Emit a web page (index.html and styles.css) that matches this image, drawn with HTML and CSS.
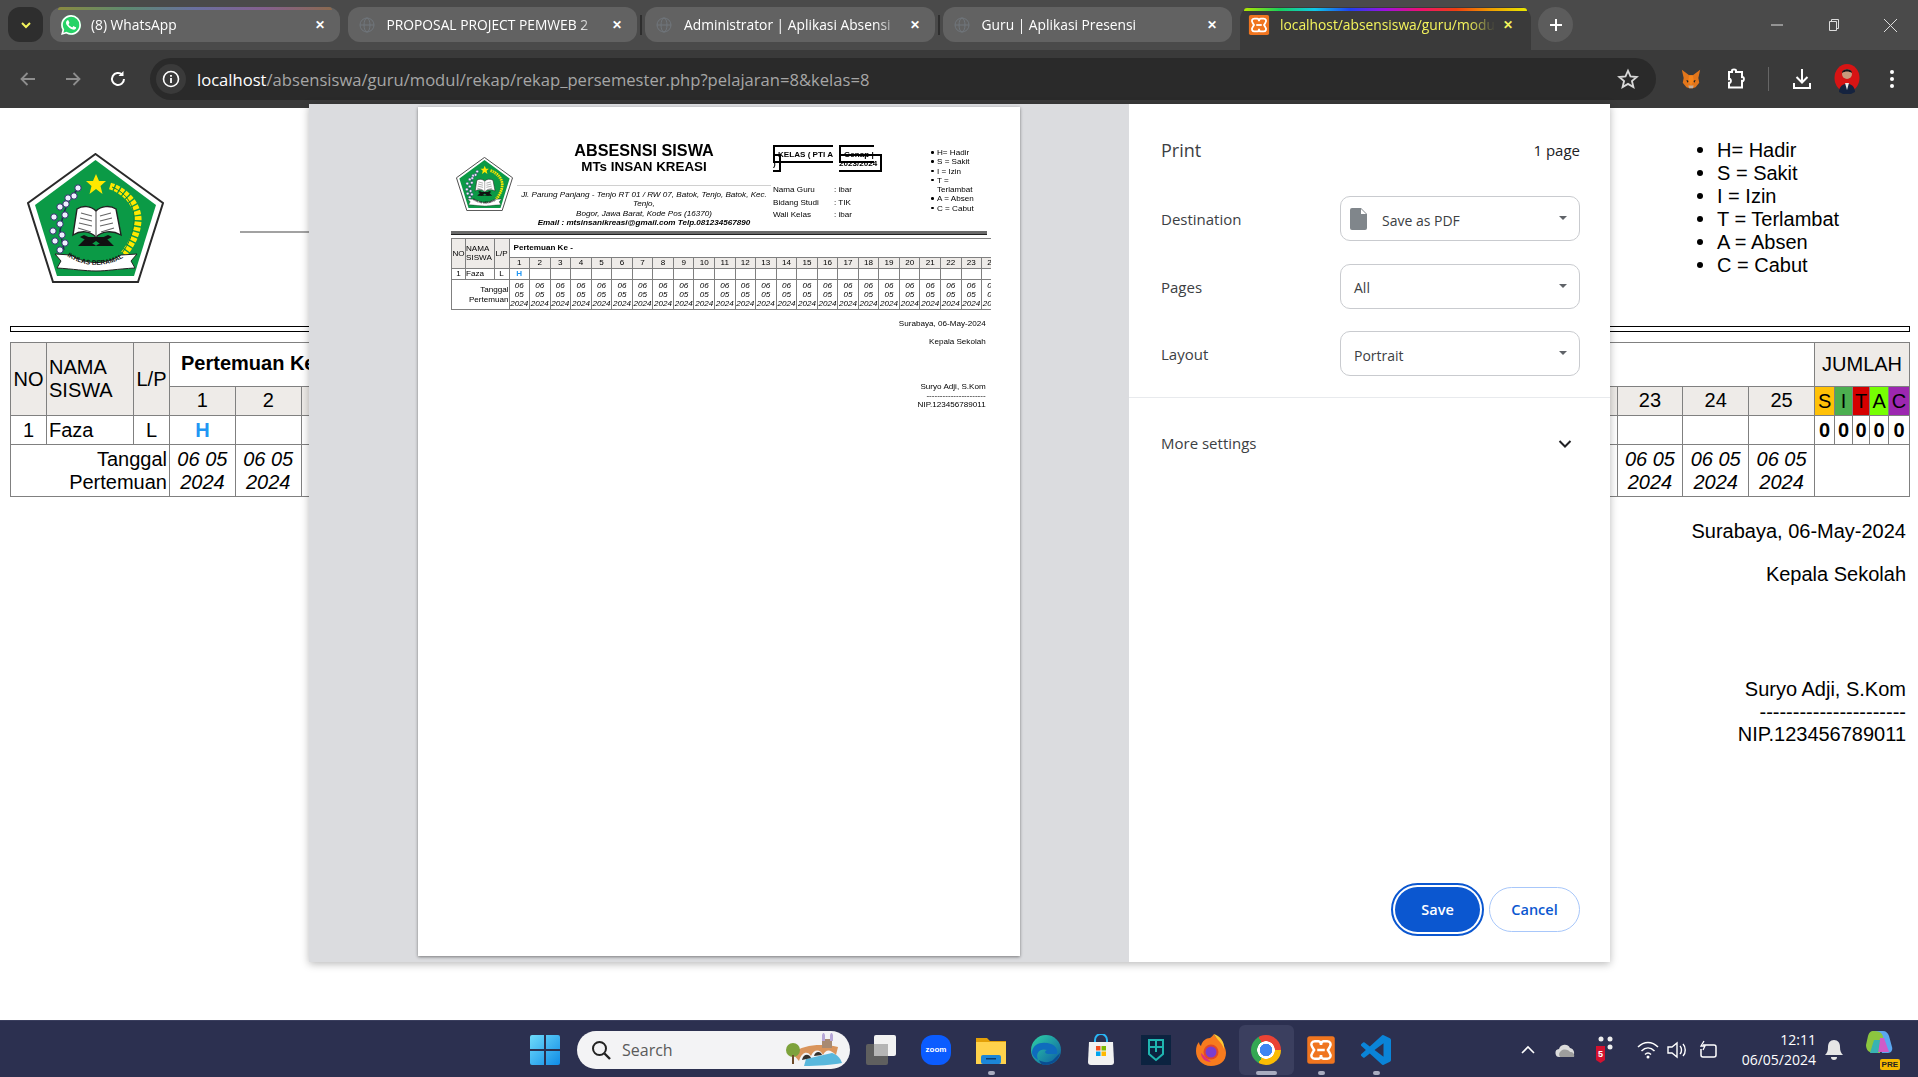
FILE: index.html
```html
<!DOCTYPE html>
<html lang="en">
<head>
    <meta charset="UTF-8">
    <title>localhost/absensiswa/guru/modul/rekap</title>
    <link rel="stylesheet" href="styles.css">
</head>
<body>
<svg class="defs" aria-hidden="true">
    <symbol id="emblem" viewBox="0 0 137 130">
        <polygon points="68.5,1 136,50 111,129 26,129 1,50" fill="#fff" stroke="#2a2a2a" stroke-width="2"/>
        <polygon points="68.5,7 129,52 107,123 30,123 8,52" fill="#0b9a46"/>
        <polygon points="69,21 72,28 79,28 73.5,33 75.5,41 69,36 62.5,41 64.5,33 59,28 66,28" fill="#ffe800"/>
        <path d="M52 34 L42 47 L36 62 L33 78 L37 97" fill="none" stroke="#1d2b4f" stroke-width="1.5"/>
        <g fill="#eef0ff" stroke="#2a2c66" stroke-width="1">
            <circle cx="51" cy="35" r="3.2"/><circle cx="47" cy="43" r="3.2"/><circle cx="41" cy="45" r="3.2"/>
            <circle cx="39" cy="51" r="3.2"/><circle cx="33" cy="54" r="3.2"/><circle cx="38" cy="62" r="3.2"/>
            <circle cx="27" cy="64" r="3.2"/><circle cx="33" cy="71" r="3.2"/><circle cx="26" cy="78" r="3.2"/>
            <circle cx="35" cy="82" r="3.2"/><circle cx="28" cy="88" r="3.2"/><circle cx="38" cy="90" r="3.2"/>
            <circle cx="33" cy="97" r="3.2"/>
        </g>
        <path d="M83 33 C100 38 112 54 111 68 C110 82 104 92 97 101" fill="none" stroke="#ffe800" stroke-width="7" stroke-dasharray="4 1.4"/>
        <path d="M85 34 C100 40 108 54 107 68 C106 82 101 92 95 100" fill="none" stroke="#0b7f3a" stroke-width="1"/>
        <path d="M46 82 L50 56 C56 52 64 53 69 58 C74 53 83 52 89 56 L94 82 C85 77 75 78 69 84 C63 78 54 77 46 82Z" fill="#fff" stroke="#222" stroke-width="1.4"/>
        <path d="M69 58V84M54 60l11 3M53 65l12 3M52 70l13 3M51 75l13 4M84 60l-11 3M85 65l-12 3M86 70l-13 3M87 75l-13 4" stroke="#666" stroke-width="1.2"/>
        <polygon points="51,93 60,84 78,84 87,93 76,93 69,88 62,93" fill="#111"/>
        <path d="M57 82l24 11H70L53 84zM81 82L57 93h11l17-9z" fill="#111"/>
        <path d="M28 101 L44 102 C60 112 78 112 94 102 L110 101 L104 108 L108 115 C90 116 80 118 69 118 C58 118 46 116 30 115 L34 108Z" fill="#fff" stroke="#222" stroke-width="1"/>
        <path id="ribbon" d="M40 103 C58 115 80 115 99 103" fill="none"/>
        <text font-family="Liberation Sans" font-size="6.6" font-weight="700" fill="#111"><textPath href="#ribbon">IKHLAS BERAMAL</textPath></text>
    </symbol>
    <symbol id="globe" viewBox="0 0 16 16">
        <g fill="none" stroke="#70767c" stroke-width="1">
            <circle cx="8" cy="8" r="7"/><ellipse cx="8" cy="8" rx="3" ry="7"/><path d="M1 8h14"/>
        </g>
    </symbol>
    <symbol id="xampp" viewBox="0 0 24 24">
        <rect x="1" y="1" width="22" height="22" rx="2" fill="#f0751f"/>
        <path d="M7 5h3c1.500 0 2 2 2 3 0-1 .5-3 2-3h3c2.500 0 3.500 2.500 2 4.500L17.500 12l1.500 2.500c1.500 2 .5 4.500-2 4.500h-3c-1.500 0-2-2-2-3 0 1-.5 3-2 3H7c-2.500 0-3.500-2.500-2-4.500L6.500 12 5 9.500C3.500 7.500 4.500 5 7 5z" fill="none" stroke="#fff" stroke-width="2"/>
        <path d="M9 12h6" stroke="#fff" stroke-width="2"/>
    </symbol>
</svg>

<header class="tabstrip">
    <button class="tab-search">
        <svg width="12" height="12" viewBox="0 0 12 12"><path d="M2 4l4 4 4-4" fill="none" stroke="#f4f45c" stroke-width="2"/></svg>
    </button>
    <div class="tab tab-whatsapp">
        <svg class="fav-wa" viewBox="0 0 24 24"><circle cx="12" cy="12" r="12" fill="#25d366"/><path fill="#fff" d="M17.472 14.382c-.297-.149-1.758-.867-2.03-.967-.273-.099-.471-.148-.67.15-.197.297-.767.966-.94 1.164-.173.199-.347.223-.644.075-.297-.15-1.255-.463-2.39-1.475-.883-.788-1.48-1.761-1.653-2.059-.173-.297-.018-.458.13-.606.134-.133.298-.347.446-.52.149-.174.198-.298.298-.497.099-.198.05-.371-.025-.52-.075-.149-.669-1.612-.916-2.207-.242-.579-.487-.5-.669-.51-.173-.008-.371-.01-.57-.01-.198 0-.52.074-.792.372-.272.297-1.04 1.016-1.04 2.479 0 1.462 1.065 2.875 1.213 3.074.149.198 2.096 3.2 5.077 4.487.709.306 1.262.489 1.694.625.712.227 1.36.195 1.871.118.571-.085 1.758-.719 2.006-1.413.248-.694.248-1.289.173-1.413-.074-.124-.272-.198-.57-.347m-5.421 7.403h-.004a9.87 9.87 0 01-5.031-1.378l-.361-.214-3.741.982.998-3.648-.235-.374a9.86 9.86 0 01-1.51-5.26c.001-5.45 4.436-9.884 9.888-9.884 2.64 0 5.122 1.03 6.988 2.898a9.825 9.825 0 012.893 6.994c-.003 5.45-4.437 9.884-9.885 9.884m8.413-18.297A11.815 11.815 0 0012.05 0C5.495 0 .16 5.335.157 11.892c0 2.096.547 4.142 1.588 5.945L.057 24l6.305-1.654a11.882 11.882 0 005.683 1.448h.005c6.554 0 11.89-5.335 11.893-11.893a11.821 11.821 0 00-3.48-8.413Z"/></svg>
        <span class="tab-title">(8) WhatsApp</span>
        <span class="tab-close">✕</span>
    </div>
    <div class="tab tab-sep">
        <svg class="fav"><use href="#globe"/></svg>
        <span class="tab-title">PROPOSAL PROJECT PEMWEB 2</span>
        <span class="tab-close">✕</span>
    </div>
    <div class="tab tab-sep">
        <svg class="fav"><use href="#globe"/></svg>
        <span class="tab-title">Administrator | Aplikasi Absensi</span>
        <span class="tab-close">✕</span>
    </div>
    <div class="tab">
        <svg class="fav"><use href="#globe"/></svg>
        <span class="tab-title">Guru | Aplikasi Presensi</span>
        <span class="tab-close">✕</span>
    </div>
    <div class="tab tab-active">
        <svg class="fav-xampp"><use href="#xampp"/></svg>
        <span class="tab-title">localhost/absensiswa/guru/modul</span>
        <span class="tab-close">✕</span>
    </div>
    <button class="tab-new">
        <svg width="14" height="14" viewBox="0 0 14 14"><path d="M7 1v12M1 7h12" stroke="#fff" stroke-width="2"/></svg>
    </button>
    <div class="win-controls">
        <span class="win-btn"><svg width="12" height="12" viewBox="0 0 12 12"><path d="M0 6h12" stroke="#ddd"/></svg></span>
        <span class="win-btn"><svg width="12" height="14" viewBox="0 0 12 14"><path d="M1.500 3.500h7v9h-7zM3.500 3V1.500h7v9H9" fill="none" stroke="#ddd"/></svg></span>
        <span class="win-btn"><svg width="15" height="15" viewBox="0 0 15 15"><path d="M1 1l13 13M14 1L1 14" stroke="#ddd"/></svg></span>
    </div>
</header>

<nav class="toolbar">
    <span class="tool"><svg width="18" height="18" viewBox="0 0 18 18"><path d="M16 9H3M8.500 3L2.500 9l6 6" fill="none" stroke="#8e8e8e" stroke-width="1.800"/></svg></span>
    <span class="tool"><svg width="18" height="18" viewBox="0 0 18 18"><path d="M2 9h13M9.500 3l6 6-6 6" fill="none" stroke="#8e8e8e" stroke-width="1.800"/></svg></span>
    <span class="tool"><svg width="18" height="18" viewBox="0 0 18 18"><path d="M15 9a6 6 0 1 1-1.800-4.300" fill="none" stroke="#fff" stroke-width="2"/><path d="M14.500 1v5h-5" fill="#fff"/></svg></span>
    <div class="omnibox">
        <span class="site-info"><svg width="18" height="18" viewBox="0 0 18 18"><circle cx="9" cy="9" r="7.500" fill="none" stroke="#fff" stroke-width="1.600"/><path d="M9 8v5M9 5v1.800" stroke="#fff" stroke-width="1.800"/></svg></span>
        <span class="url"><b>localhost</b>/absensiswa/guru/modul/rekap/rekap_persemester.php?pelajaran=8&amp;kelas=8</span>
        <svg class="star" width="22" height="22" viewBox="0 0 24 24"><path d="M12 3l2.700 6.200 6.800.6-5.200 4.400 1.600 6.600L12 17.300l-5.900 3.500 1.600-6.600-5.200-4.400 6.800-.6z" fill="none" stroke="#d8d8d8" stroke-width="2"/></svg>
    </div>
    <span class="tool tool-first"><svg width="22" height="22" viewBox="0 0 24 24"><path d="M2 2l8 6h4l8-6-2 9 1 5-4 5-3 1h-4l-3-1-4-5 1-5z" fill="#e2761b"/><path d="M7 13l3 1-2 2zM17 13l-3 1 2 2z" fill="#222"/><path d="M9 19h6l-1 3h-4z" fill="#c0ad9e"/><path d="M10 8h4l1 6-3 5-3-5z" fill="#f6851b"/></svg></span>
    <span class="tool"><svg width="20" height="22" viewBox="0 0 20 22"><path d="M6 4V2.500c0-1.500 4-1.500 4 0V4h6v5c2.500-.5 2.500 4.500 0 4v6.500H3V15c2.500.5 2.500-5 0-4V4z" fill="none" stroke="#fff" stroke-width="2"/></svg></span>
    <span class="tool-sep"></span>
    <span class="tool"><svg width="20" height="22" viewBox="0 0 20 22"><path d="M10 1v13M4.500 9l5.500 5.500L15.500 9M2 15v5h16v-5" fill="none" stroke="#fff" stroke-width="2"/></svg></span>
    <span class="tool"><svg width="26" height="30" viewBox="0 0 26 30"><ellipse cx="13" cy="14" rx="12.500" ry="14" fill="#d71414"/><circle cx="13" cy="10" r="5" fill="#c99a7c"/><path d="M8 9c0-5 10-5 10 0-3-2-7-2-10 0z" fill="#15151a"/><path d="M5 28c0-11 16-11 16 0l-4 2H9z" fill="#15233f"/><path d="M11 19h4l-2 7z" fill="#e8e8e8"/></svg></span>
    <span class="tool"><svg width="6" height="20" viewBox="0 0 6 20"><circle cx="3" cy="3" r="2" fill="#fff"/><circle cx="3" cy="10" r="2" fill="#fff"/><circle cx="3" cy="17" r="2" fill="#fff"/></svg></span>
</nav>

<main class="page">
    <div class="doc-head">
        <svg class="doc-logo"><use href="#emblem"/></svg>
        <div class="doc-title"><hr class="doc-line"></div>
        <ul class="doc-legend">
            <li>H= Hadir</li>
            <li>S = Sakit</li>
            <li>I = Izin</li>
            <li>T = Terlambat</li>
            <li>A = Absen</li>
            <li>C = Cabut</li>
        </ul>
    </div>
    <div class="doc-rule"></div>
    <table class="rekap">
        <colgroup>
            <col class="c-no"><col class="c-name"><col class="c-lp"><col class="c-day" span="25">
            <col class="c-s"><col class="c-i"><col class="c-t"><col class="c-a"><col class="c-c">
        </colgroup>
        <tr class="row-head">
            <th rowspan="2">NO</th>
            <th rowspan="2" class="left">NAMA SISWA</th>
            <th rowspan="2">L/P</th>
            <td colspan="25" class="meet"><b>Pertemuan Ke -</b></td>
            <th colspan="5">JUMLAH</th>
        </tr>
        <tr class="row-num row-title">
            <th>1</th><th>2</th><th>3</th><th>4</th><th>5</th><th>6</th><th>7</th><th>8</th><th>9</th><th>10</th>
            <th>11</th><th>12</th><th>13</th><th>14</th><th>15</th><th>16</th><th>17</th><th>18</th><th>19</th><th>20</th>
            <th>21</th><th>22</th><th>23</th><th>24</th><th>25</th>
            <th class="sum-s">S</th><th class="sum-i">I</th><th class="sum-t">T</th><th class="sum-a">A</th><th class="sum-c">C</th>
        </tr>
        <tr class="row-num">
            <td>1</td><td class="left">Faza</td><td>L</td>
            <td class="hadir">H</td><td></td><td></td><td></td><td></td><td></td><td></td><td></td><td></td><td></td>
            <td></td><td></td><td></td><td></td><td></td><td></td><td></td><td></td><td></td><td></td>
            <td></td><td></td><td></td><td></td><td></td>
            <td class="zero">0</td><td class="zero">0</td><td class="zero">0</td><td class="zero">0</td><td class="zero">0</td>
        </tr>
        <tr class="row-date">
            <td colspan="3" class="right">Tanggal<br>Pertemuan</td>
            <td>06 05 2024</td><td>06 05 2024</td><td>06 05 2024</td><td>06 05 2024</td><td>06 05 2024</td>
            <td>06 05 2024</td><td>06 05 2024</td><td>06 05 2024</td><td>06 05 2024</td><td>06 05 2024</td>
            <td>06 05 2024</td><td>06 05 2024</td><td>06 05 2024</td><td>06 05 2024</td><td>06 05 2024</td>
            <td>06 05 2024</td><td>06 05 2024</td><td>06 05 2024</td><td>06 05 2024</td><td>06 05 2024</td>
            <td>06 05 2024</td><td>06 05 2024</td><td>06 05 2024</td><td>06 05 2024</td><td>06 05 2024</td>
            <td colspan="5" class="blank"></td>
        </tr>
    </table>
    <div class="sign">
        <p>Surabaya, 06-May-2024</p>
        <p>Kepala Sekolah</p>
        <p class="sign-name">Suryo Adji, S.Kom<br>----------------------<br>NIP.123456789011</p>
    </div>

    <!-- print dialog -->
    <section class="print">
        <div class="preview">
            <div class="paper">
                <div class="sheet">
                    <div class="pv-head">
                        <svg class="pv-logo"><use href="#emblem"/></svg>
                        <div class="pv-title">
                            <div class="pv-h1">ABSESNSI SISWA</div>
                            <div class="pv-h2">MTs INSAN KREASI</div>
                            <hr class="pv-line">
                            <div class="pv-addr">Jl. Parung Panjang - Tenjo RT 01 / RW 07, Batok, Tenjo, Batok, Kec. Tenjo,<br>Bogor, Jawa Barat, Kode Pos (16370)<br><b>Email : mtsinsanikreasi@gmail.com Telp.081234567890</b></div>
                        </div>
                        <div class="pv-info">
                            <div class="pv-boxes">
                                <div class="pv-box-kelas"><span class="pv-box">KELAS ( PTI A )</span></div>
                                <div class="pv-box-sem"><span class="pv-box">Genap | 2023/2024</span></div>
                            </div>
                            <div class="pv-teacher">
                                <span>Nama Guru</span><span>: ibar</span>
                                <span>Bidang Studi</span><span>: TIK</span>
                                <span>Wali Kelas</span><span>: ibar</span>
                            </div>
                        </div>
                        <ul class="pv-legend">
                            <li>H= Hadir</li>
                            <li>S = Sakit</li>
                            <li>I = Izin</li>
                            <li>T = Terlambat</li>
                            <li>A = Absen</li>
                            <li>C = Cabut</li>
                        </ul>
                    </div>
                    <div class="pv-rule"></div>
                    <div class="pv-clip">
                        <table class="pv-table">
                            <colgroup>
                                <col class="p-no"><col class="p-name"><col class="p-lp"><col class="p-day" span="25">
                            </colgroup>
                            <tr class="pr-head">
                                <th rowspan="2">NO</th>
                                <th rowspan="2" class="left">NAMA SISWA</th>
                                <th rowspan="2">L/P</th>
                                <td colspan="25" class="pv-meet"><b>Pertemuan Ke -</b></td>
                            </tr>
                            <tr class="pr-num">
                                <th>1</th><th>2</th><th>3</th><th>4</th><th>5</th><th>6</th><th>7</th><th>8</th><th>9</th><th>10</th>
                                <th>11</th><th>12</th><th>13</th><th>14</th><th>15</th><th>16</th><th>17</th><th>18</th><th>19</th><th>20</th>
                                <th>21</th><th>22</th><th>23</th><th>24</th><th>25</th>
                            </tr>
                            <tr class="pr-row">
                                <td>1</td><td class="left">Faza</td><td>L</td>
                                <td class="hadir">H</td><td></td><td></td><td></td><td></td><td></td><td></td><td></td><td></td><td></td>
                                <td></td><td></td><td></td><td></td><td></td><td></td><td></td><td></td><td></td><td></td>
                                <td></td><td></td><td></td><td></td><td></td>
                            </tr>
                            <tr class="pr-date">
                                <td colspan="3" class="right">Tanggal<br>Pertemuan</td>
                                <td>06 05 2024</td><td>06 05 2024</td><td>06 05 2024</td><td>06 05 2024</td><td>06 05 2024</td>
                                <td>06 05 2024</td><td>06 05 2024</td><td>06 05 2024</td><td>06 05 2024</td><td>06 05 2024</td>
                                <td>06 05 2024</td><td>06 05 2024</td><td>06 05 2024</td><td>06 05 2024</td><td>06 05 2024</td>
                                <td>06 05 2024</td><td>06 05 2024</td><td>06 05 2024</td><td>06 05 2024</td><td>06 05 2024</td>
                                <td>06 05 2024</td><td>06 05 2024</td><td>06 05 2024</td><td>06 05 2024</td><td>06 05 2024</td>
                            </tr>
                        </table>
                    </div>
                    <div class="pv-sign">
                        <p>Surabaya, 06-May-2024</p>
                        <p>Kepala Sekolah</p>
                        <p class="pv-sign-name">Suryo Adji, S.Kom<br>----------------------<br>NIP.123456789011</p>
                    </div>
                </div>
            </div>
        </div>
        <aside class="side">
            <div class="side-head">
                <span class="side-title">Print</span>
                <span class="side-pages">1 page</span>
            </div>
            <div class="settings">
                <div class="field">
                    <span class="field-label">Destination</span>
                    <div class="select select-dest">
                        <svg width="18" height="22" viewBox="0 0 18 22"><path d="M2 0h9l6 6v14a2 2 0 0 1-2 2H2a2 2 0 0 1-2-2V2a2 2 0 0 1 2-2z" fill="#80868b"/><path d="M11 1l5 5h-5z" fill="#fff"/></svg>
                        <span>Save as PDF</span>
                    </div>
                </div>
                <div class="field">
                    <span class="field-label">Pages</span>
                    <div class="select"><span>All</span></div>
                </div>
                <div class="field">
                    <span class="field-label">Layout</span>
                    <div class="select"><span>Portrait</span></div>
                </div>
            </div>
            <div class="more">
                <span>More settings</span>
                <svg width="14" height="10" viewBox="0 0 14 10"><path d="M1.500 2L7 7.500 12.500 2" fill="none" stroke="#202124" stroke-width="2"/></svg>
            </div>
            <div class="actions">
                <button class="btn btn-save">Save</button>
                <button class="btn btn-cancel">Cancel</button>
            </div>
        </aside>
    </section>
</main>

<footer class="taskbar">
    <span class="task task-win">
        <svg width="30" height="30" viewBox="0 0 30 30"><defs><linearGradient id="win" x1="0" y1="0" x2="1" y2="1"><stop offset="0" stop-color="#6fdcfb"/><stop offset="1" stop-color="#0f8be6"/></linearGradient></defs><path d="M0 2a2 2 0 0 1 2-2h12v14H0zM16 0h12a2 2 0 0 1 2 2v12H16zM0 16h14v14H2a2 2 0 0 1-2-2zM16 16h14v12a2 2 0 0 1-2 2H16z" fill="url(#win)"/></svg>
    </span>
    <div class="search">
        <svg width="20" height="20" viewBox="0 0 20 20"><circle cx="8.500" cy="8.500" r="6.500" fill="none" stroke="#222" stroke-width="2"/><path d="M13.500 13.500L19 19" stroke="#222" stroke-width="2.400"/></svg>
        <span class="search-text">Search</span>
        <svg class="search-art" width="58" height="34" viewBox="0 0 58 34"><path d="M18 33c14 0 28-1 38-3-2-6-6-9-10-10l-26 6z" fill="#59b7dc"/><path d="M6 20C18 12 34 10 52 14l-2 8c-6-6-10-6-13 0-3-6-9-6-12 1-3-5-9-5-12 5z" fill="#d9945c"/><path d="M16 27c1-6 7-7 9-2zM28 23c1-5 7-5 8-1z" fill="#33302c"/><rect x="36" y="6" width="10" height="9" fill="#a88a72"/><path d="M36 2v6h3V2l-1.500-3zM44 2v6h3V2l-1.500-3z" fill="#b7a7d8"/><circle cx="7" cy="17" r="7" fill="#7da23c"/><rect x="6" y="22" width="2" height="9" fill="#6d4b2a"/></svg>
    </div>
    <span class="task"><svg width="30" height="30" viewBox="0 0 30 30"><rect x="0" y="9" width="22" height="21" rx="2" fill="#5f5f5f"/><rect x="8" y="0" width="22" height="21" rx="2" fill="#f2f2f2"/><rect x="8" y="9" width="14" height="12" fill="#b5b5b5"/></svg></span>
    <span class="task"><span class="zoom-ic">zoom</span></span>
    <span class="task task-on">
        <svg width="30" height="28" viewBox="0 0 30 28"><path d="M0 2h11l3 3h16v23H0z" fill="#e3a008"/><path d="M0 6h30v22H0z" fill="#ffd24c"/><rect x="5" y="19" width="20" height="9" rx="2" fill="#1c86d8"/><rect x="10" y="22" width="10" height="1.500" fill="#0b3d70"/></svg>
    </span>
    <span class="task"><svg width="30" height="30" viewBox="0 0 30 30"><defs><linearGradient id="edge" x1="0" y1="0" x2="1" y2="1"><stop offset="0" stop-color="#2fd4a5"/><stop offset="1" stop-color="#0c59a4"/></linearGradient></defs><circle cx="15" cy="15" r="15" fill="url(#edge)"/><path d="M1 17C2 8 12 6 20 9c5 2 7 6 6 10h-9c-3 0-4-3-1-4-6-2-12 2-9 10-3-2-6-4-6-8z" fill="#0f6cbd"/><path d="M29 18c-1 7-8 12-15 12-3 0-5-2-6-5 4 3 12 3 15-1l6-6z" fill="#0a4d92"/></svg></span>
    <span class="task"><svg width="28" height="32" viewBox="0 0 28 32"><path d="M8 9V6a6 6 0 0 1 12 0v3" fill="none" stroke="#29b6f6" stroke-width="2"/><path d="M2 8h24l1 20a3 3 0 0 1-3 3H4a3 3 0 0 1-3-3z" fill="#f2f2f2"/><rect x="9" y="12" width="4.500" height="4.500" fill="#f25022"/><rect x="14.500" y="12" width="4.500" height="4.500" fill="#7fba00"/><rect x="9" y="17.500" width="4.500" height="4.500" fill="#00a4ef"/><rect x="14.500" y="17.500" width="4.500" height="4.500" fill="#ffb900"/></svg></span>
    <span class="task"><svg width="30" height="30" viewBox="0 0 30 30"><rect width="30" height="30" fill="#0c2340"/><path d="M8 5h14v14l-7 6-7-6zM15 5v12M8 12h14" fill="none" stroke="#1fb5b0" stroke-width="2"/></svg></span>
    <span class="task"><svg width="30" height="32" viewBox="0 0 30 32"><path d="M15 32C6 32 0 25 0 17c0-4 1-7 3-9 0 2 1 3 2 4 1-5 5-8 9-8 2-1 3-3 4-4 1 3 3 4 5 6 4 3 7 8 7 13 0 8-6 13-15 13z" fill="#f77b1e"/><path d="M18 0c1 4 8 8 10 15 1-7-4-13-10-15z" fill="#ffc933"/><path d="M15 28c-6 0-10-4-10-9 3 3 6 5 10 9z" fill="#e0307a"/><circle cx="15" cy="18" r="7.500" fill="#e0482a"/><circle cx="15" cy="18" r="5.500" fill="#7a3dd0"/></svg></span>
    <span class="task task-chrome task-on task-wide"><span class="chrome-ic"></span></span>
    <span class="task task-on"><svg width="30" height="34"><use href="#xampp"/></svg></span>
    <span class="task task-on"><svg width="30" height="34" viewBox="0 0 24 24"><path fill="#0a84d8" d="M23.150 2.587L18.210.21a1.494 1.494 0 0 0-1.705.29l-9.460 8.630-4.120-3.128a.999.999 0 0 0-1.276.057L.327 7.261A1 1 0 0 0 .326 8.740L3.899 12 .326 15.260a1 1 0 0 0 .001 1.479L1.650 17.940a.999.999 0 0 0 1.276.057l4.120-3.128 9.460 8.630a1.492 1.492 0 0 0 1.704.29l4.942-2.377A1.500 1.500 0 0 0 24 20.060V3.939a1.500 1.500 0 0 0-.850-1.352zm-5.146 14.861L10.826 12l7.178-5.448v10.896z"/></svg></span>

    <div class="tray">
        <span class="tray-ic"><svg width="14" height="10" viewBox="0 0 14 10"><path d="M1 8l6-6 6 6" fill="none" stroke="#fff" stroke-width="1.600"/></svg></span>
        <span class="tray-ic tray-wide"><svg width="22" height="16" viewBox="0 0 22 16"><path d="M5 15a4 4 0 0 1-1-8 6 6 0 0 1 11-1 5 5 0 0 1 2 9z" fill="#dcdcdc"/><path d="M5 15a4 4 0 0 1 1-6c3-3 8-1 9 1 3 0 5 2 4 5z" fill="#9d9d9d"/></svg></span>
        <span class="tray-ic tray-wide"><svg width="18" height="28" viewBox="0 0 18 28"><circle cx="6" cy="3" r="2.500" fill="#eee"/><circle cx="15" cy="3" r="2.500" fill="#eee"/><circle cx="15" cy="11" r="2.500" fill="#eee"/><path d="M1 10h9v14l-4.500 3L1 24z" fill="#d3112f"/><text x="5.500" y="21" font-family="Liberation Sans" font-size="9" font-weight="700" fill="#fff" text-anchor="middle">5</text></svg></span>
        <span class="tray-ic tray-gap"><svg width="22" height="18" viewBox="0 0 22 18"><path d="M1 6c6-6 14-6 20 0M4.500 10c4-4 9-4 13 0M8 13.500c2-2 4-2 6 0" fill="none" stroke="#fff" stroke-width="1.500"/><circle cx="11" cy="16" r="1.500" fill="#fff"/></svg></span>
        <span class="tray-ic"><svg width="22" height="18" viewBox="0 0 22 18"><path d="M1 6h4l5-4v14l-5-4H1z" fill="none" stroke="#fff" stroke-width="1.400"/><path d="M13 5c2 2 2 6 0 8M16 3c3 3 3 9 0 12" fill="none" stroke="#fff" stroke-width="1.400"/></svg></span>
        <span class="tray-ic"><svg width="20" height="20" viewBox="0 0 20 20"><path d="M5 5h11a2 2 0 0 1 2 2v8a2 2 0 0 1-2 2H5a2 2 0 0 1-2-2V9" fill="none" stroke="#fff" stroke-width="1.500"/><path d="M6 1L3 6h4l-2 4" fill="none" stroke="#fff" stroke-width="1.300"/></svg></span>
        <div class="clock"><div>12:11</div><div>06/05/2024</div></div>
        <span class="bell"><svg width="18" height="22" viewBox="0 0 18 22"><path d="M9 1c-4 0-6 3-6 7 0 4-1 6-3 8h18c-2-2-3-4-3-8 0-4-2-7-6-7z" fill="#e6e6e6"/><path d="M6 18a3 3 0 0 0 6 0z" fill="#e6e6e6"/></svg></span>
        <span class="copilot">
            <svg width="28" height="32" viewBox="0 0 28 32"><path d="M8 1h9c3 0 5 2 6 5l3 11c1 3-1 6-4 6h-6L8 1z" fill="#5ba7f0"/><path d="M8 1C4 1 3 3 2 6L0 15c0 5 3 8 8 8h6l3-13c1-4-1-9-9-9z" fill="#8cc63f"/><path d="M14 8h4l5 14H12z" fill="#d05bc7"/><path d="M8 10h6l-2 13H4z" fill="#38b3b3"/></svg>
            <span class="pre">PRE</span>
        </span>
    </div>
</footer>
</body>
</html>
```

FILE: styles.css
```css
* {
    margin: 0;
    padding: 0;
    box-sizing: border-box;
    list-style: none;
}

html, body {
    width: 1918px;
    height: 1077px;
    overflow: hidden;
}

body {
    display: flex;
    flex-direction: column;
    background-color: #fff;
    font-family: "Liberation Sans", sans-serif;
}

button {
    border: 0;
    font-family: inherit;
}

.defs {
    position: absolute;
    width: 0;
    height: 0;
}

/* tabs */
.tabstrip {
    height: 50px;
    flex: none;
    display: flex;
    align-items: flex-start;
    padding: 7px 0 0 8px;
    background-color: #4a4a4a;
    font-family: "Open Sans", sans-serif;
    color: #fff;
}

.tab-search {
    width: 35px;
    height: 35px;
    margin-right: 7px;
    border-radius: 12px;
    background-color: #2e2e2e;
    display: flex;
    align-items: center;
    justify-content: center;
}

.tab {
    position: relative;
    width: 289.5px;
    height: 35px;
    margin-right: 8px;
    padding: 0 15px 0 11px;
    border-radius: 12px;
    background-color: #626262;
    display: flex;
    align-items: center;
    font-size: 13.8px;
}

.tab-whatsapp::before {
    content: "";
    position: absolute;
    left: 8px;
    right: 8px;
    top: 0;
    height: 3px;
    border-radius: 3px 3px 0 0;
    background: linear-gradient(90deg, #8a8a40, #5d8a70, #6a70a0, #85608f, #8a6a50);
}

.tab-sep::after {
    content: "";
    position: absolute;
    right: -5px;
    top: 8px;
    width: 2px;
    height: 20px;
    background-color: #2e2e2e;
}

.tab-active {
    width: 291px;
    height: 43px;
    margin-right: 7px;
    padding: 0 18px 8px 8px;
    border-radius: 12px 12px 0 0;
    background-color: #3a3a3a;
    color: #f4f45c;
}

.tab-active::before {
    content: "";
    position: absolute;
    left: 4px;
    right: 4px;
    top: 1px;
    height: 3px;
    border-radius: 3px 3px 0 0;
    background: linear-gradient(90deg, #b4e800, #18d05a, #10c8e8, #2040f0, #a010e0, #f01070, #f04010, #f0a000, #e8e800);
}

.fav {
    width: 16px;
    height: 16px;
    margin-right: 12px;
    flex: none;
}

.fav-wa {
    width: 20px;
    height: 20px;
    margin-right: 10px;
    flex: none;
}

.fav-xampp {
    width: 22px;
    height: 24px;
    margin-right: 10px;
    flex: none;
}

.tab-title {
    flex: 1;
    overflow: hidden;
    white-space: nowrap;
    -webkit-mask-image: linear-gradient(90deg, #000 88%, transparent);
    mask-image: linear-gradient(90deg, #000 88%, transparent);
}

.tab-close {
    flex: none;
    margin-left: 8px;
    font-size: 12px;
    font-weight: 700;
}

.tab-new {
    width: 35px;
    height: 35px;
    border-radius: 50%;
    background-color: #5c5c5c;
    display: flex;
    align-items: center;
    justify-content: center;
}

.win-controls {
    display: flex;
    margin: -7px -1px 0 auto;
}

.win-btn {
    width: 57px;
    height: 50px;
    display: flex;
    align-items: center;
    justify-content: center;
}

/* address bar */
.toolbar {
    height: 58px;
    flex: none;
    display: flex;
    align-items: center;
    padding: 0 4px 0 5px;
    background-color: #3a3a3a;
}

.tool {
    width: 45px;
    height: 42px;
    flex: none;
    display: flex;
    align-items: center;
    justify-content: center;
}

.omnibox {
    width: 1506px;
    height: 42px;
    margin-left: 10px;
    flex: none;
    display: flex;
    align-items: center;
    padding: 0 17px 0 6px;
    border-radius: 21px;
    background-color: #2a2a2a;
    font-family: "Open Sans", sans-serif;
    color: #a6a6a6;
}

.site-info {
    width: 30px;
    height: 30px;
    border-radius: 50%;
    background-color: #3a3a3a;
    display: flex;
    align-items: center;
    justify-content: center;
}

.url {
    margin-left: 11px;
    font-size: 16.6px;
    white-space: nowrap;
}

.url b {
    font-weight: 400;
    color: #fff;
}

.star {
    margin-left: auto;
}

.tool-first {
    margin-left: 12px;
}

.tool-sep {
    width: 1px;
    height: 24px;
    margin: 0 10px;
    background-color: #666;
}

/* page under the dialog */
.page {
    position: relative;
    flex: 1;
    padding: 0 8px 0 10px;
    font-size: 20px;
    line-height: 23px;
    color: #000;
}

.doc-head {
    height: 218px;
    display: flex;
}

.doc-logo {
    width: 137px;
    height: 130px;
    margin: 45px 76px 0 17px;
    flex: none;
}

.doc-title {
    flex: 1;
    padding: 123px 300px 0 0;
}

.doc-line {
    border: 0;
    height: 2px;
    background-color: #a2a2a2;
}

.doc-legend {
    width: 193px;
    margin-top: 31px;
    flex: none;
}

.doc-legend li,
.pv-legend li {
    position: relative;
}

.doc-legend li::before {
    content: "";
    position: absolute;
    left: -20px;
    top: 8px;
    width: 6px;
    height: 6px;
    border-radius: 50%;
    background-color: #000;
}

.doc-rule {
    height: 6px;
    border: 1px solid #000;
}

.rekap {
    width: 1900px;
    margin-top: 10px;
    table-layout: fixed;
    border-collapse: collapse;
}

.rekap th,
.rekap td {
    border: 1px solid #808080;
    padding: 0 2px;
    text-align: center;
    font-weight: 400;
}

.rekap th {
    background-color: #eeebe8;
}

.c-no { width: 36px; }
.c-name { width: 87px; }
.c-lp { width: 36px; }
.c-day { width: 65.8px; }
.c-s { width: 20px; }
.c-i { width: 18px; }
.c-t { width: 17px; }
.c-a { width: 19px; }
.c-c { width: 21px; }

.row-head { height: 44px; }
.row-num { height: 29px; }
.row-date { height: 52px; }

.row-title th {
    padding-bottom: 1px;
}

.row-date td {
    font-style: italic;
}

.rekap .left,
.pv-table .left {
    text-align: left;
}

.rekap .right,
.pv-table .right {
    text-align: right;
    font-style: normal;
}

.rekap .meet {
    text-align: left;
    padding: 0 0 3px 11px;
}

.rekap .hadir {
    font-weight: 700;
    color: #2196f3;
}

.rekap .zero {
    font-weight: 700;
    padding: 0;
}

.rekap .sum-s { background-color: #ffc107; padding: 0; }
.rekap .sum-i { background-color: #4caf50; padding: 0; }
.rekap .sum-t { background-color: #d50000; padding: 0; }
.rekap .sum-a { background-color: #76ff03; padding: 0; }
.rekap .sum-c { background-color: #9c27b0; padding: 0; }

.sign {
    padding: 23px 4px 0 0;
    text-align: right;
}

.sign p {
    margin-bottom: 20px;
}

.sign .sign-name {
    margin-top: 92px;
    line-height: 22.5px;
}

/* print dialog */
.print {
    position: absolute;
    left: 309px;
    top: -4px;
    width: 1301px;
    height: 858px;
    display: flex;
    box-shadow: 0 2px 8px rgba(0, 0, 0, .28);
}

.preview {
    width: 820px;
    padding: 3px 0 0 109px;
    background-color: #dbdcdf;
}

.paper {
    width: 602px;
    height: 849px;
    background-color: #fff;
    box-shadow: 0 1px 3px rgba(0, 0, 0, .45);
    overflow: hidden;
}

.sheet {
    padding: 36px 0 0 33px;
    font-size: 8.1px;
    line-height: 9.3px;
    color: #000;
    filter: blur(.3px);
}

.pv-head {
    height: 88px;
    display: flex;
}

.pv-logo {
    width: 57px;
    height: 54px;
    margin: 14px 4px 0 5px;
    flex: none;
}

.pv-title {
    width: 254px;
    flex: none;
    text-align: center;
}

.pv-h1 {
    margin-top: -1px;
    font-size: 16.2px;
    line-height: 17px;
    font-weight: 700;
}

.pv-h2 {
    font-size: 13.4px;
    line-height: 15px;
    font-weight: 700;
}

.pv-line {
    border: 0;
    height: 1px;
    margin: 11px 0 4px;
    background-color: #d0d0d0;
}

.pv-addr {
    font-style: italic;
}

.pv-info {
    width: 160px;
    margin-left: 2px;
    flex: none;
}

.pv-boxes {
    display: flex;
    height: 36px;
    margin-top: 6px;
    font-weight: 700;
}

.pv-box-kelas {
    width: 60px;
    margin-right: 6px;
    flex: none;
}

.pv-box-sem {
    width: 46px;
    flex: none;
}

.pv-box {
    border: 2px solid #000;
    padding: 2.5px 3px;
}

.pv-teacher {
    display: grid;
    grid-template-columns: 61px auto;
    grid-auto-rows: 12.6px;
}

.pv-legend {
    width: 42px;
    margin: 5px 0 0 4px;
    flex: none;
}

.pv-legend li::before {
    content: "";
    position: absolute;
    left: -6px;
    top: 3px;
    width: 2.5px;
    height: 2.5px;
    border-radius: 50%;
    background-color: #000;
}

.pv-rule {
    width: 536px;
    height: 4px;
    background-color: #6a6a6a;
    border-bottom: 1px solid #222;
}

.pv-clip {
    width: 540px;
    margin-top: 3px;
    overflow: hidden;
}

.pv-table {
    width: 571.2px;
    table-layout: fixed;
    border-collapse: collapse;
}

.pv-table th,
.pv-table td {
    border: 1px solid #808080;
    padding: 0;
    text-align: center;
    font-weight: 400;
}

.pv-table th {
    background-color: #eeebe8;
}

.p-no { width: 14px; }
.p-name { width: 28.5px; }
.p-lp { width: 15px; }
.p-day { width: 20.55px; }

.pr-head { height: 19px; }
.pr-num { height: 10.7px; }
.pr-row { height: 11.5px; }
.pr-date { height: 30px; }

.pr-date td {
    font-style: italic;
}

.pv-table .pv-meet {
    text-align: left;
    padding: 0 0 1px 4px;
}

.pv-table .hadir {
    font-weight: 700;
    color: #2196f3;
}

.pv-sign {
    width: 534.700px;
    padding-top: 8.500px;
    text-align: right;
}

.pv-sign p {
    margin-bottom: 8.700px;
}

.pv-sign .pv-sign-name {
    margin-top: 36px;
    line-height: 9px;
}

.side {
    flex: 1;
    display: flex;
    flex-direction: column;
    background-color: #fff;
    font-family: "Open Sans", sans-serif;
    color: #3c4043;
}

.side-head {
    height: 40px;
    margin: 26px 30px 26px 32px;
    display: flex;
    align-items: center;
    justify-content: space-between;
}

.side-title {
    font-size: 18px;
}

.side-pages {
    font-size: 15px;
    color: #202124;
}

.settings {
    padding: 0 30px 21px 32px;
    border-bottom: 1px solid #e8eaed;
}

.field {
    height: 45px;
    margin-bottom: 22.500px;
    display: flex;
    align-items: center;
    justify-content: space-between;
    font-size: 15px;
}

.field:last-child {
    margin-bottom: 0;
}

.field-label {
    padding-top: 2px;
}

.select {
    position: relative;
    width: 240px;
    height: 45px;
    padding: 3px 13px 0;
    border: 1px solid #c9cbcf;
    border-radius: 10px;
    display: flex;
    align-items: center;
    font-size: 14px;
}

.select::after {
    content: "";
    position: absolute;
    right: 12px;
    top: 19px;
    border-top: 4px solid #5f6368;
    border-left: 4.500px solid transparent;
    border-right: 4.500px solid transparent;
}

.select-dest {
    padding-left: 9px;
    gap: 14px;
}

.select-dest svg {
    margin-top: -3px;
}

.more {
    height: 50px;
    margin-top: 20.500px;
    padding: 0 38px 0 32px;
    display: flex;
    align-items: center;
    justify-content: space-between;
    font-size: 15px;
}

.actions {
    margin-top: auto;
    padding: 0 30px 30px 0;
    display: flex;
    justify-content: flex-end;
    gap: 9px;
}

.btn {
    height: 45px;
    border-radius: 23px;
    font-family: "Open Sans", sans-serif;
    font-size: 14.5px;
    font-weight: 600;
}

.btn-save {
    width: 85px;
    background-color: #0b57d0;
    color: #fff;
    outline: 2px solid #0b57d0;
    outline-offset: 2px;
}

.btn-cancel {
    width: 91px;
    background-color: #fff;
    border: 1px solid #a8c7fa;
    color: #0b57d0;
}

/* taskbar */
.taskbar {
    height: 57px;
    flex: none;
    display: flex;
    align-items: center;
    padding: 1px 0 0 517px;
    background-color: #2c3050;
    border-top: 1px solid #3a3e5e;
    font-family: "Open Sans", sans-serif;
    color: #fff;
}

.task {
    position: relative;
    width: 55px;
    height: 50px;
    flex: none;
    display: flex;
    align-items: center;
    justify-content: center;
}

.task-on::after {
    content: "";
    position: absolute;
    left: 24px;
    bottom: 0;
    width: 7px;
    height: 4px;
    border-radius: 2px;
    background-color: #a9adc0;
}

.task-wide::after {
    left: 17px;
    width: 21px;
}

.task-chrome {
    border-radius: 6px;
    background-color: #3b3f5f;
}

.chrome-ic {
    width: 30px;
    height: 30px;
    border-radius: 50%;
    background: radial-gradient(#3f86f2 0 6px, #fff 6.500px 8.500px, transparent 9px), conic-gradient(#ea4335 0 90deg, #fbbc04 90deg 210deg, #34a853 210deg 330deg, #ea4335 330deg);
}

.zoom-ic {
    width: 30px;
    height: 30px;
    border-radius: 12px;
    background-color: #0b5cff;
    display: flex;
    align-items: center;
    justify-content: center;
    font-family: "Liberation Sans", sans-serif;
    font-size: 8px;
    font-weight: 700;
}

.search {
    position: relative;
    width: 273px;
    height: 38px;
    margin: 0 3.500px 0 5px;
    padding-left: 14px;
    flex: none;
    display: flex;
    align-items: center;
    border-radius: 19px;
    background-color: #f3f3f5;
}

.search-text {
    margin-left: 11px;
    font-size: 16px;
    color: #5a5a5a;
}

.search-art {
    position: absolute;
    right: 6px;
    bottom: 2px;
}

.tray {
    margin-left: auto;
    padding-right: 16px;
    display: flex;
    align-items: center;
}

.tray-ic {
    width: 30px;
    display: flex;
    justify-content: center;
}

.tray-wide {
    margin-left: 8px;
}

.tray-gap {
    margin-left: 14px;
}

.clock {
    width: 93px;
    font-size: 14px;
    line-height: 20px;
    text-align: right;
    white-space: nowrap;
}

.bell {
    width: 28px;
    margin-left: 4px;
    display: flex;
    justify-content: center;
}

.copilot {
    position: relative;
    width: 44px;
    height: 40px;
    margin-left: 10px;
    display: flex;
    justify-content: center;
}

.pre {
    position: absolute;
    right: 2px;
    bottom: 0;
    padding: 0 2px;
    border-radius: 2px;
    background-color: #f5b800;
    color: #222;
    font-family: "Liberation Sans", sans-serif;
    font-size: 8px;
    line-height: 11px;
    font-weight: 700;
}
```
